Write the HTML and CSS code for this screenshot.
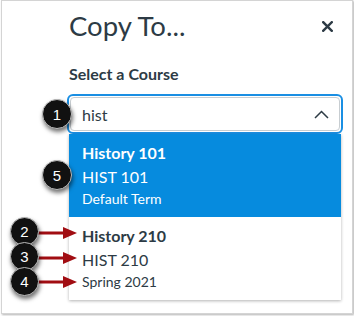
FILE: index.html
```html
<!DOCTYPE html>
<html>
<head>
<meta charset="utf-8">
<link rel="stylesheet" href="styles.css">
</head>
<body>
<div class="frame">
  <div class="head">
    <h1 class="title">Copy To...</h1>
    <svg class="close" width="11" height="11" viewBox="0 0 11 11"><path d="M1.2 1.2L9.8 9.8M9.8 1.2L1.2 9.8" stroke="#2d3b45" stroke-width="2.4" stroke-linecap="square"/></svg>
  </div>
  <div class="label">Select a Course</div>
  <div class="combo">
    <div class="ring">
      <div class="field">
        <span class="val">hist</span>
        <svg class="caret" width="15" height="9" viewBox="0 0 15 9"><path d="M1 8L7.5 1.5L14 8" fill="none" stroke="#2d3b45" stroke-width="1.5"/></svg>
      </div>
    </div>
    <ul class="menu">
      <li class="opt active">
        <div class="name">History 101</div>
        <div class="code">HIST 101</div>
        <div class="term">Default Term</div>
      </li>
      <li class="opt">
        <div class="name">History 210</div>
        <div class="code">HIST 210</div>
        <div class="term">Spring 2021</div>
      </li>
    </ul>
  </div>
</div>
<svg class="arrows" width="354" height="316" viewBox="0 0 354 316">
  <g fill="#a10d12" stroke="#a10d12">
    <line x1="36" y1="233" x2="66" y2="233" stroke-width="3"/>
    <polygon points="63,227 77,233 63,239" stroke="none"/>
    <line x1="36" y1="258" x2="66" y2="258" stroke-width="3"/>
    <polygon points="63,252 77,258 63,264" stroke="none"/>
    <line x1="36" y1="282" x2="66" y2="282" stroke-width="3"/>
    <polygon points="63,276 77,282 63,288" stroke="none"/>
  </g>
</svg>
<div class="badge b1">1</div>
<div class="badge b5">5</div>
<div class="badge sm b2">2</div>
<div class="badge sm b3">3</div>
<div class="badge sm b4">4</div>
</body>
</html>
```

FILE: styles.css
```css
html, body {
  margin: 0;
  padding: 0;
}
body {
  width: 354px;
  height: 316px;
  position: relative;
  overflow: hidden;
  background: #fff;
  font-family: Lato, "Noto Sans", sans-serif;
  color: #2d3b45;
}
.frame {
  box-sizing: border-box;
  margin-left: 1px;
  width: 352px;
  height: 314px;
  border: 1px solid #d4d4d4;
  box-shadow: 1px 1px 2px rgba(0, 0, 0, 0.3);
  padding: 8px 11px 0 67px;
}
.head {
  display: flex;
  align-items: center;
  justify-content: space-between;
}
.title {
  margin: 0;
  font-size: 27.5px;
  font-weight: 400;
  line-height: 34px;
}
.close {
  display: block;
  margin-right: 8px;
}
.label {
  margin-top: 19px;
  font-size: 16px;
  font-weight: 700;
  line-height: 24px;
}
.combo {
  margin: 8px -2px 0;
}
.ring {
  box-sizing: border-box;
  height: 40px;
  border: 2px solid #1a8fe3;
  border-radius: 6px;
  padding: 1px;
}
.field {
  box-sizing: border-box;
  height: 34px;
  border: 1px solid #c7cdd1;
  border-radius: 4px;
  display: flex;
  align-items: center;
  justify-content: space-between;
  padding: 0 10px 0 11px;
  font-size: 16px;
}
.caret {
  display: block;
}
.menu {
  list-style: none;
  margin: 0 2px;
  padding: 0;
  background: #fff;
  box-shadow: 0 1px 3px rgba(0, 0, 0, 0.3);
}
.opt {
  padding: 7px 13px 8px;
}
.opt.active {
  background: #068bde;
  color: #fff;
}
.name {
  font-size: 16px;
  font-weight: 700;
  line-height: 24px;
}
.code {
  font-size: 16px;
  line-height: 24px;
}
.term {
  font-size: 14px;
  line-height: 20px;
}
.arrows {
  position: absolute;
  left: 0;
  top: 0;
  pointer-events: none;
}
.badge {
  position: absolute;
  box-sizing: border-box;
  width: 30px;
  height: 30px;
  border-radius: 50%;
  background: #111;
  border: 1px solid #bbb;
  box-shadow: 1px 3px 4px rgba(0, 0, 0, 0.55);
  color: #fff;
  font-family: "Liberation Sans", Arial, sans-serif;
  font-size: 15px;
  display: flex;
  align-items: center;
  justify-content: center;
}
.badge.sm {
  width: 29px;
  height: 29px;
}
.b1 { left: 42px; top: 99px; }
.b5 { left: 42px; top: 160px; }
.b2 { left: 10px; top: 217px; }
.b3 { left: 10px; top: 242px; }
.b4 { left: 10px; top: 267px; }
```
